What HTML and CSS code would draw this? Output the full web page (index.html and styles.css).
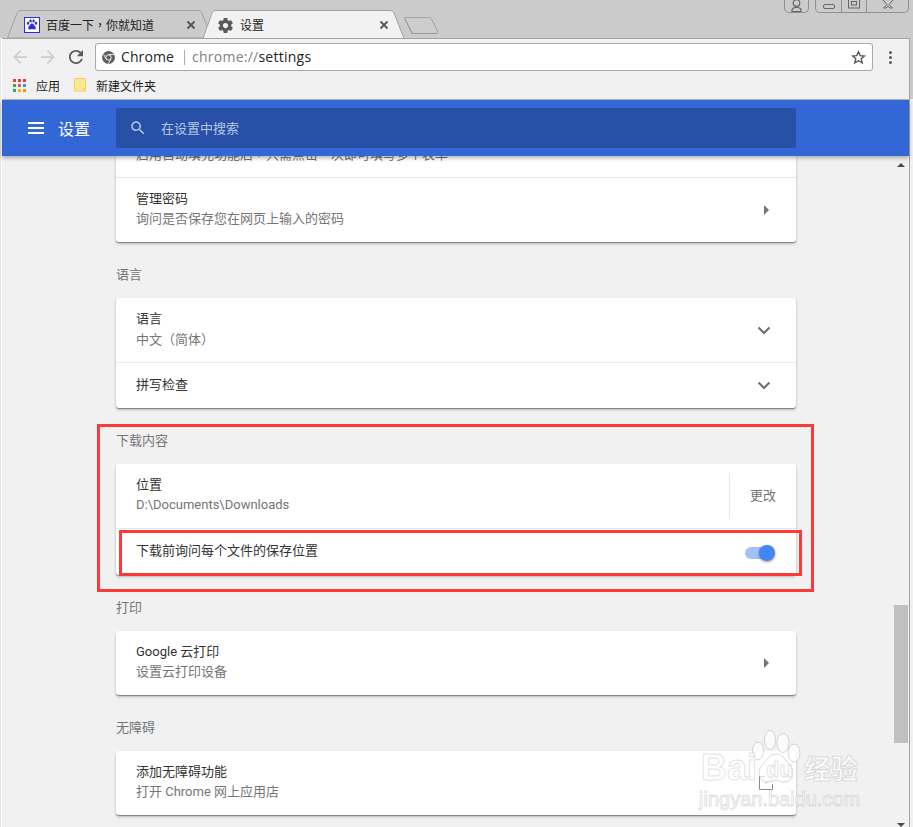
FILE: index.html
```html
<!DOCTYPE html>
<html lang="zh-CN">
<head>
<meta charset="utf-8">
<title>设置</title>
<link rel="stylesheet" href="styles.css">
</head>
<body>
<div class="screen">
  <div class="tabstrip">
    <svg class="tabshapes" width="913" height="38" viewBox="0 0 913 38">
      <path d="M7.5 38 L17 13 Q18 10.5 21 10.5 H198 Q201 10.5 202 13 L208 29 L204.5 38 Z" fill="#cbcbcb" stroke="#a3a3a3"/>
      <path d="M203 38.5 L212 13 Q213 10.5 216 10.5 H390 Q393 10.5 394 13 L404 38.5 Z" fill="#f2f2f2" stroke="#a3a3a3"/>
      <path d="M404.5 18 Q404 17.5 406 17.5 H429 Q431 17.5 431.5 19 L437.5 31 Q438 33.5 436 33.5 H414 Q412 33.5 411.5 32 Z" fill="#cdcdcd" stroke="#a3a3a3"/>
      <path d="M405 19 L412 33.5 H437" fill="none" stroke="#999"/>
    </svg>
    <div class="tab tab-first">
      <span class="favicon">
        <svg width="16" height="16" viewBox="0 0 16 16"><rect x=".5" y=".5" width="15" height="15" fill="#fff" stroke="#2932e1"/><g fill="#2932e1"><ellipse cx="4" cy="6.2" rx="1.2" ry="1.6"/><ellipse cx="6.6" cy="3.9" rx="1.2" ry="1.6"/><ellipse cx="9.6" cy="3.9" rx="1.2" ry="1.6"/><ellipse cx="12" cy="6.2" rx="1.2" ry="1.6"/><path d="M8 6.4c1.6 0 2 1.5 3 2.5 1 1 1.4 3.6-1 3.6-1 0-1.3-.4-2-.4s-1 .4-2 .4c-2.400 0-2-2.600-1-3.600 1-1 1.400-2.500 3-2.500z"/></g></svg>
      </span>
      <span class="tab-title">百度一下<span class="centered-punct" lang="zh-TW">，</span>你就知道</span>
      <svg class="tab-close" width="10" height="10" viewBox="0 0 10 10"><path d="M1.500 1.500l7 7M8.500 1.500l-7 7" stroke="#555" stroke-width="1.800"/></svg>
    </div>
    <div class="tab tab-second">
      <svg class="gear" width="15" height="15" viewBox="2 2 20 20"><path fill="#5a5a5a" d="M19.430 12.980c.04-.32.07-.64.07-.98s-.03-.66-.07-.98l2.110-1.650c.19-.15.24-.42.12-.64l-2-3.460c-.12-.22-.39-.3-.61-.22l-2.490 1c-.52-.4-1.080-.73-1.690-.98l-.38-2.650C14.460 2.180 14.250 2 14 2h-4c-.25 0-.46.18-.49.42l-.38 2.650c-.61.25-1.170.59-1.690.98l-2.490-1c-.23-.09-.49 0-.61.22l-2 3.460c-.13.22-.07.49.12.64l2.110 1.650c-.04.32-.07.65-.07.98s.03.66.07.98l-2.110 1.650c-.19.15-.24.42-.12.64l2 3.460c.12.22.39.3.61.22l2.490-1c.52.4 1.080.73 1.690.98l.38 2.650c.03.24.24.42.49.42h4c.25 0 .46-.18.49-.42l.38-2.650c.61-.25 1.170-.59 1.690-.98l2.490 1c.23.09.49 0 .61-.22l2-3.460c.12-.22.07-.49-.12-.64l-2.110-1.650zM12 15.500c-1.930 0-3.500-1.570-3.500-3.500s1.570-3.500 3.500-3.500 3.500 1.570 3.500 3.500-1.570 3.500-3.500 3.500z"/></svg>
      <span class="tab-title">设置</span>
      <svg class="tab-close" width="10" height="10" viewBox="0 0 10 10"><path d="M1.500 1.500l7 7M8.500 1.500l-7 7" stroke="#555" stroke-width="1.800"/></svg>
    </div>
    <div class="controls">
      <div class="ctl-group ctl-user">
        <svg width="23" height="12" viewBox="0 0 23 12"><circle cx="11.500" cy="3" r="3.300" fill="none" stroke="#666" stroke-width="1.200"/><path d="M7 11.500v-1.500q0-2 3-2.500h3q3 .5 3 2.500v1.500z" fill="none" stroke="#666" stroke-width="1.200"/></svg>
      </div>
      <div class="ctl-group">
        <div class="ctl"><svg width="14" height="12" viewBox="0 0 14 12"><rect x="1.500" y="4.500" width="11" height="4" rx="1.500" fill="none" stroke="#666"/></svg></div>
        <div class="ctl ctl-mid"><svg width="14" height="12" viewBox="0 0 14 12"><rect x="1.500" y="-1.500" width="11" height="9.500" fill="none" stroke="#666"/><rect x="4.500" y="1.500" width="5" height="3.500" fill="none" stroke="#666"/></svg></div>
        <div class="ctl ctl-close"><svg width="14" height="12" viewBox="0 0 14 12"><path d="M2 0l4 4.500-3.500 3.500h2.500l2-2 2 2h2.500L8 4.500 12 0" fill="none" stroke="#666"/></svg></div>
      </div>
    </div>
  </div>

  <div class="window">
    <div class="toolbar">
      <svg class="tool tool-back" width="14" height="14" viewBox="4 4 16 16"><path fill="#cdcdcd" d="M20 11H7.830l5.590-5.590L12 4l-8 8 8 8 1.410-1.410L7.830 13H20v-2z"/></svg>
      <svg class="tool tool-forward" width="14" height="14" viewBox="4 4 16 16"><path fill="#cdcdcd" d="M12 4l-1.410 1.410L16.170 11H4v2h12.170l-5.580 5.590L12 20l8-8z"/></svg>
      <svg class="tool tool-reload" width="14" height="14" viewBox="4 4 16 16"><path fill="#5a5a5a" d="M17.650 6.350C16.200 4.900 14.210 4 12 4c-4.420 0-7.990 3.580-7.990 8s3.570 8 7.990 8c3.730 0 6.840-2.550 7.730-6h-2.080c-.82 2.330-3.040 4-5.650 4-3.310 0-6-2.690-6-6s2.690-6 6-6c1.660 0 3.140.69 4.220 1.780L13 11h7V4l-2.350 2.350z"/></svg>
      <div class="omnibox">
        <svg class="chrome-icon" width="13" height="13" viewBox="0 0 13 13"><circle cx="6.500" cy="6.500" r="6.500" fill="#5f5f5f"/><circle cx="6.500" cy="6.500" r="3" fill="#fff"/><circle cx="6.500" cy="6.500" r="2.200" fill="#5f5f5f"/><path d="M6.500 3.500H12M4 8L1.500 3M9 8l-2.700 4.800" stroke="#fff" stroke-width=".8"/></svg>
        <span class="omni-origin">Chrome</span>
        <span class="omni-sep"></span>
        <span class="omni-url"><span class="omni-scheme">chrome://</span>settings</span>
        <svg class="star" width="15" height="15" viewBox="0 0 15 15"><path d="M7.500 1.700l1.700 3.900 4.200.4-3.200 2.800 1 4.100-3.700-2.200-3.700 2.200 1-4.100L1.600 6l4.200-.4z" fill="none" stroke="#555" stroke-width="1.400"/></svg>
      </div>
      <div class="menu-dots"><i></i><i></i><i></i></div>
    </div>
    <div class="bookmarks">
      <span class="apps"><i class="c1"></i><i class="c2"></i><i class="c3"></i><i class="c4"></i><i class="c5"></i><i class="c6"></i><i class="c7"></i><i class="c8"></i><i class="c9"></i></span>
      <span class="bm-label bm-apps">应用</span>
      <svg class="folder" width="12" height="14" viewBox="0 0 12 14"><path d="M.500 1.500q0-1 1-1h9q1 0 1 1v11.500h-11z" fill="#fde992" stroke="#f0cf60"/><path d="M9 13v-2.500h2.500" fill="none" stroke="#f0cf60"/></svg>
      <span class="bm-label">新建文件夹</span>
    </div>
    <header class="appbar">
      <div class="burger"><i></i><i></i><i></i></div>
      <span class="appbar-title">设置</span>
      <div class="search">
        <svg width="18" height="18" viewBox="0 0 24 24"><path fill="#b5c6e8" d="M15.500 14h-.79l-.28-.27C15.410 12.590 16 11.110 16 9.500 16 5.910 13.090 3 9.500 3S3 5.910 3 9.500 5.910 16 9.500 16c1.610 0 3.090-.59 4.230-1.570l.27.28v.79l5 4.990L20.490 19l-4.990-5zm-6 0C7.010 14 5 11.990 5 9.500S7.010 5 9.500 5 14 7.010 14 9.500 11.990 14 9.500 14z"/></svg>
        <span class="search-text">在设置中搜索</span>
      </div>
    </header>
    <div class="body">
      <main class="content">
        <section class="card">
          <div class="row row-clipped"><span class="clipped-text">启用自动填充功能后<span class="centered-punct" lang="zh-TW">，</span>只需点击一次即可填写多个表单</span></div>
          <div class="row row-tall">
            <div class="row-text"><div class="title">管理密码</div><div class="sub">询问是否保存您在网页上输入的密码</div></div>
            <span class="tri"></span>
          </div>
        </section>
        <h2 class="heading">语言</h2>
        <section class="card">
          <div class="row row-first">
            <div class="row-text"><div class="title">语言</div><div class="sub">中文<span class="centered-punct" lang="zh-TW">（</span>简体<span class="centered-punct" lang="zh-TW">）</span></div></div>
            <svg class="chev" width="14" height="9" viewBox="0 0 14 9"><path d="M1.500 1.500L7 7l5.500-5.500" fill="none" stroke="#6e6e6e" stroke-width="2"/></svg>
          </div>
          <div class="row row-short">
            <div class="title">拼写检查</div>
            <svg class="chev" width="14" height="9" viewBox="0 0 14 9"><path d="M1.500 1.500L7 7l5.500-5.500" fill="none" stroke="#6e6e6e" stroke-width="2"/></svg>
          </div>
        </section>
        <h2 class="heading">下载内容</h2>
        <section class="card">
          <div class="row row-first row-action">
            <div class="row-text"><div class="title">位置</div><div class="sub">D:\Documents\Downloads</div></div>
            <div class="action">更改</div>
          </div>
          <div class="row row-short row-short-last">
            <div class="title">下载前询问每个文件的保存位置</div>
            <span class="toggle"><i></i></span>
          </div>
        </section>
        <h2 class="heading">打印</h2>
        <section class="card">
          <div class="row row-first">
            <div class="row-text"><div class="title">Google 云打印</div><div class="sub">设置云打印设备</div></div>
            <span class="tri"></span>
          </div>
        </section>
        <h2 class="heading">无障碍</h2>
        <section class="card">
          <div class="row row-first">
            <div class="row-text"><div class="title">添加无障碍功能</div><div class="sub">打开 Chrome 网上应用店</div></div>
            <svg class="ext" width="14" height="14" viewBox="0 0 14 14"><path d="M6 .5H.5v13h13V8" fill="none" stroke="#8a8a8a"/><path d="M8 .8h5.200V6M13 1L6 8" fill="none" stroke="#d8d8d8" stroke-width="1.200"/></svg>
          </div>
        </section>
      </main>
      <div class="scrollbar">
        <span class="sb-up"></span>
        <span class="sb-thumb"></span>
        <span class="sb-down"></span>
      </div>
    </div>
  </div>

  <div class="mark mark-outer"></div>
  <div class="mark mark-inner"></div>

  <div class="wm">
    <svg class="wm-paw" width="52" height="56" viewBox="0 0 52 56"><g fill="rgba(255,255,255,.7)" stroke="rgba(160,160,160,.4)"><ellipse cx="20" cy="12" rx="5.500" ry="9.500"/><ellipse cx="33" cy="15" rx="6" ry="9.500"/><ellipse cx="8" cy="23" rx="5.500" ry="9" /><ellipse cx="44" cy="25" rx="6" ry="9"/><path d="M26 26c7 0 9 6 14 11 5 6 4 17-6 17-4 0-5-2-8-2s-4 2-8 2c-10 0-11-11-6-17 5-5 7-11 14-11z"/></g></svg>
    <span class="wm-bai">Bai</span>
    <span class="wm-du">du</span>
    <span class="wm-cn">经验</span>
    <span class="wm-url">jingyan.baidu.com</span>
  </div>
</div>
</body>
</html>
```

FILE: styles.css
```css
* { box-sizing: border-box; }
html, body { margin: 0; padding: 0; }
body { font-family: Roboto, "Noto Sans CJK SC", sans-serif; font-size: 13px; color: #333; }
i { display: block; }
.centered-punct { font-family: "Noto Sans CJK TC", sans-serif; }

.screen {
  position: relative;
  width: 913px;
  height: 827px;
  overflow: hidden;
  display: flex;
  flex-direction: column;
  background: linear-gradient(#cbcbcb 0, #cbcbcb 99px, #f0f0f0 99px);
}

/* tab strip */
.tabstrip { position: relative; height: 38px; flex: none; display: flex; }
.tabshapes { position: absolute; left: 0; top: 0; }
.tab { position: relative; display: flex; align-items: center; height: 28px; margin-top: 11px; font-size: 12px; color: #222; }
.tab-first { margin-left: 24px; width: 172px; }
.tab-second { margin-left: 22px; width: 171px; }
.favicon { width: 16px; height: 16px; flex: none; margin-right: 6px; display: flex; }
.gear { flex: none; margin-right: 7px; }
.tab-title { flex: 1; white-space: nowrap; padding-bottom: 2px; }
.tab-close { flex: none; }

.controls { position: absolute; right: 4px; top: 0; display: flex; gap: 6px; }
.ctl-group { display: flex; height: 13px; border: 1px solid #8f8f8f; border-top: 0; border-radius: 0 0 5px 5px; }
.ctl-user { width: 25px; }
.ctl-user svg { display: block; }
.ctl { width: 25px; display: flex; justify-content: center; }
.ctl svg { display: block; }
.ctl-mid { width: 26px; border-left: 1px solid #8f8f8f; border-right: 1px solid #8f8f8f; }
.ctl-close { width: 41px; }

/* browser window */
.window {
  flex: 1;
  min-height: 0;
  margin: 0 3px 0 2px;
  border-top: 1px solid #a3a3a3;
  border-right: 1px solid #a3a3a3;
  display: flex;
  flex-direction: column;
  background: #f1f1f1;
  box-shadow: -1px 0 0 #fff, -2px 0 0 #e4e4e4;
}
.toolbar { height: 32px; flex: none; display: flex; align-items: center; position: relative; padding-left: 11px; padding-top: 4px; }
.tool { flex: none; display: block; }
.tool-back { margin-right: 14px; }
.tool-forward { margin-right: 14px; }
.tool-reload { margin-right: 12px; }
.omnibox {
  flex: none;
  width: 778px;
  height: 28px;
  background: #fff;
  border: 1px solid #a9a9a9;
  border-radius: 3px;
  display: flex;
  align-items: center;
  padding-left: 6px;
  font-family: "Open Sans", sans-serif;
  font-size: 14px;
  color: #222;
}
.chrome-icon { flex: none; margin-right: 6px; }
.omni-origin { color: #222; letter-spacing: .1px; padding-bottom: 2px; }
.omni-sep { width: 1px; height: 15px; background: #aaa; margin: 0 7px 0 10px; }
.omni-url { flex: 1; color: #222; letter-spacing: .25px; padding-bottom: 2px; }
.omni-scheme { color: #808080; }
.star { flex: none; margin-right: 6px; }
.menu-dots { margin-left: 16px; display: flex; flex-direction: column; gap: 2px; }
.menu-dots i { width: 3px; height: 3px; border-radius: 50%; background: #5a5a5a; }

.bookmarks { height: 29px; flex: none; display: flex; align-items: center; padding-left: 11px; font-size: 12px; color: #222; border-bottom: 1px solid #b8b8b8; }
.apps { display: grid; grid-template-columns: repeat(3, 3px); grid-auto-rows: 3px; gap: 2px; margin-right: 10px; }
.c1 { background: #e34133; } .c2 { background: #e34133; } .c3 { background: #e34133; }
.c4 { background: #3aa757; } .c5 { background: #e8574a; } .c6 { background: #4285f4; }
.c7 { background: #3aa757; } .c8 { background: #f5b400; } .c9 { background: #f59b00; }
.bm-apps { margin-right: 14px; }
.folder { flex: none; margin-right: 10px; }

.appbar { position: relative; z-index: 2; height: 56px; flex: none; margin-top: 0; background: #3367d6; display: flex; align-items: center; color: #fff; box-shadow: 0 2px 4px rgba(0,0,0,.3); }
.burger { width: 16px; margin-left: 26px; display: flex; flex-direction: column; gap: 3px; }
.burger i { height: 2px; background: #fff; }
.appbar-title { font-size: 16px; margin-left: 14px; width: 58px; flex: none; }
.search { width: 680px; height: 40px; background: #2850a7; border-radius: 2px; display: flex; align-items: center; padding-left: 13px; color: #b5c6e8; font-size: 13px; }
.search-text { margin-left: 14px; padding-bottom: 2px; }

/* page body */
.body { flex: 1; min-height: 0; display: flex; overflow: hidden; }
.content { flex: 1; min-width: 0; padding-left: 114px; overflow: hidden; }
.card { width: 680px; background: #fff; border-radius: 3px; box-shadow: 0 1px 1px rgba(0,0,0,.35), 0 2px 3px rgba(0,0,0,.2); overflow: hidden; }
.heading { margin: 0; height: 56px; padding-top: 7px; display: flex; align-items: center; font-size: 13px; font-weight: 400; color: #757575; }
.row { display: flex; align-items: center; justify-content: space-between; padding: 0 20px; }
.row-clipped { height: 21px; align-items: flex-start; color: #757575; }
.clipped-text { margin-top: -12px; line-height: 20px; white-space: nowrap; }
.row-tall { height: 65px; border-top: 1px solid #e8e8e8; }
.row-first { height: 64px; }
.row-short { height: 46px; border-top: 1px solid #e8e8e8; }
.row-short-last { height: 47px; }
.row-short .title { padding-bottom: 2px; }
.row-text { line-height: 20px; padding-bottom: 2px; }
.title { color: #333; line-height: 20px; }
.sub { color: #757575; line-height: 20px; }
.tri { width: 0; height: 0; border-left: 5px solid #757575; border-top: 5px solid transparent; border-bottom: 5px solid transparent; margin-right: 7px; }
.chev { flex: none; margin-right: 5px; }
.ext { flex: none; margin-right: 3px; }
.row-action { padding-right: 0; }
.action { width: 67px; height: 46px; padding-bottom: 3px; border-left: 1px solid #e8e8e8; display: flex; align-items: center; justify-content: center; color: #757575; }
.toggle { position: relative; display: block; width: 26px; height: 12px; border-radius: 6px; background: #a0c2f9; margin-right: 5px; margin-top: 1px; }
.toggle i { position: absolute; right: -4px; top: -2px; width: 16px; height: 16px; border-radius: 50%; background: #4285f4; box-shadow: 0 1px 3px rgba(0,0,0,.4); }

.scrollbar { position: relative; width: 16px; flex: none; }
.sb-thumb { position: absolute; left: 1px; top: 449px; width: 14px; height: 138px; background: #c0c0c0; }
.sb-up { position: absolute; left: 4px; top: 7px; border-left: 4px solid transparent; border-right: 4px solid transparent; border-bottom: 4px solid #4a4a4a; }
.sb-down { position: absolute; left: 4px; top: 667px; border-left: 4px solid transparent; border-right: 4px solid transparent; border-top: 4px solid #4a4a4a; }

/* annotation boxes */
.mark { position: absolute; border: 3px solid #fb3a3a; z-index: 5; }
.mark-outer { left: 97px; top: 424px; width: 717px; height: 168px; }
.mark-inner { left: 119px; top: 530px; width: 683px; height: 46px; }

/* watermark */
.wm { position: absolute; left: 698px; top: 728px; width: 170px; height: 84px; z-index: 6; font-family: "Liberation Sans", sans-serif; color: rgba(255,255,255,.8); -webkit-text-stroke: 1px rgba(150,150,150,.3); }
.wm-paw { position: absolute; left: 52px; top: 0; }
.wm-bai { position: absolute; left: 3px; top: 20px; font-size: 36px; line-height: 40px; font-weight: 700; }
.wm-du { position: absolute; left: 68px; top: 29px; font-size: 22px; line-height: 26px; font-weight: 700; }
.wm-cn { position: absolute; left: 106px; top: 23px; font-family: "Noto Sans CJK SC", sans-serif; font-size: 27px; line-height: 34px; font-weight: 700; }
.wm-url { position: absolute; left: 1px; top: 58px; font-size: 20px; line-height: 26px; }
```
